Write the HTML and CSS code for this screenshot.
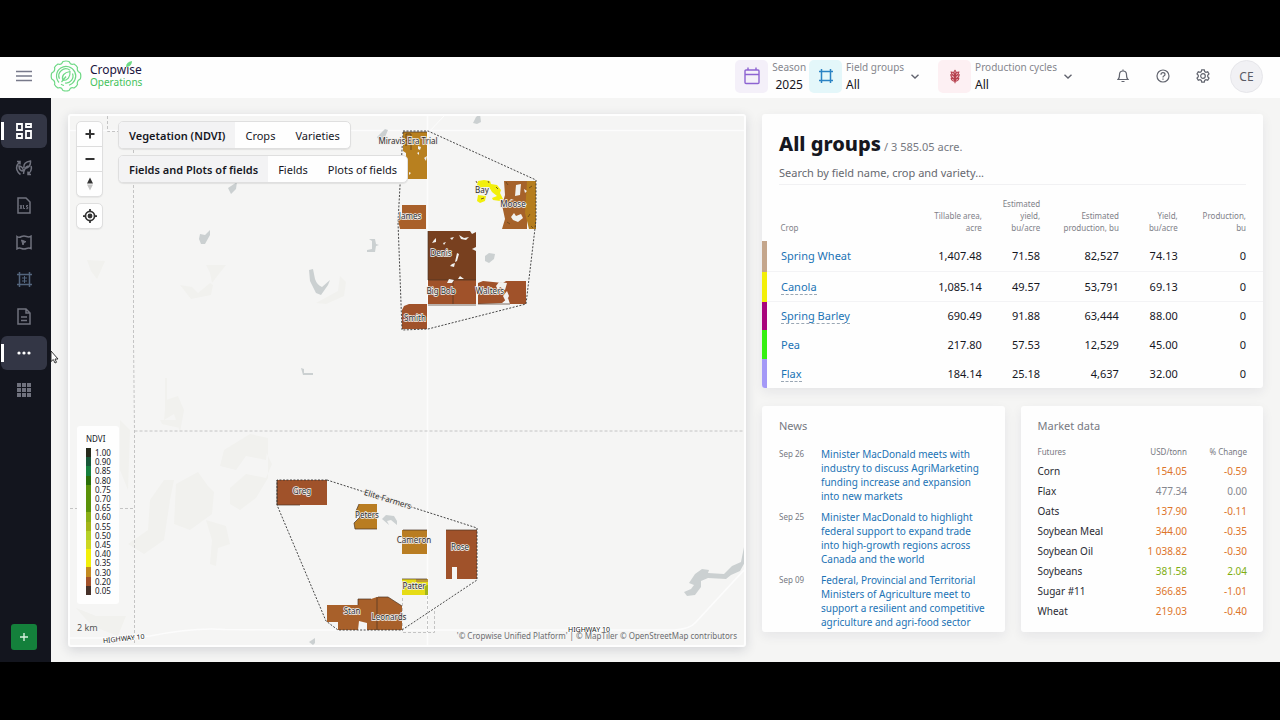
FILE: index.html
```html
<!DOCTYPE html>
<html lang="en">
<head>
<meta charset="utf-8">
<title>Cropwise Operations</title>
<link rel="stylesheet" href="styles.css">
</head>
<body>
<div class="app">
  <header class="topbar">
    <button class="icon-btn menu-btn" aria-label="Menu">
      <svg width="16" height="12" viewBox="0 0 16 12"><path d="M0 1.500h16M0 6h16M0 10.500h16" stroke="#77798a" stroke-width="1.400"/></svg>
    </button>
    <a class="brand" href="#">
      <svg width="32" height="32" viewBox="-16 -16 32 32" fill="none" stroke="#6fd986" stroke-width="1.200">
        <path d="M-3-14.500Q0-15.500 3-14.500L4.500-12.200Q6-11.200 8-12Q10.500-10.500 11.500-8.500Q10.800-6 12.200-4.500L14.300-3Q15.300 0 14.300 3L12.200 4.500Q10.800 6.500 11.500 8.500Q10.500 10.500 8 12Q6 11.200 4.500 12.200L3 14.500Q0 15.500-3 14.500L-4.500 12.200Q-6 11.200-8 12Q-10.500 10.500-11.500 8.500Q-10.800 6-12.200 4.500L-14.300 3Q-15.300 0-14.300-3L-12.200-4.500Q-10.800-6-11.500-8.500Q-10.500-10.500-8-12Q-6-11.200-4.500-12.200Z"/>
        <path d="M-7 6.500A9.600 9.600 0 1 1 3 9.200M-6.500 2.800A7 7 0 0 1 4-5.800M6.500-2.500A7 7 0 0 1-1 7M-2 9.500A9.600 9.600 0 0 1-5 8.300"/>
        <path d="M-3 4.500C-5-.500-1.500-3.500 4-4.500C4.500 1 1.500 4.500-3 4.500M-4.500 6L0 .5"/>
      </svg>
      <span class="brand-text">
        <span class="brand-name">Cropwise<svg class="brand-leaf" width="6" height="7" viewBox="0 0 6 7"><path d="M0 6Q0 1 6 0Q6 5 1 6Z" fill="#6fd986"/></svg></span>
        <span class="brand-sub">Operations</span>
      </span>
    </a>
    <div class="filters">
      <button class="filter season">
        <span class="tile violet"><svg width="16" height="18" viewBox="0 0 16 18" fill="none" stroke="#8d63d2" stroke-width="1.400"><rect x="1" y="3" width="14" height="13.500" rx="1"/><path d="M1 7.500h14M4 .5V3M12 .5V3"/></svg></span>
        <span class="filter-text centered"><span class="filter-label">Season</span><span class="filter-value">2025</span></span>
      </button>
      <button class="filter groups">
        <span class="tile cyan"><svg width="14" height="14" viewBox="0 0 14 14" fill="none" stroke="#2a83c4" stroke-width="1.500"><path d="M2.500 0v14M11.500 0v14M0 2.500h14M0 11.500h14"/></svg></span>
        <span class="filter-text"><span class="filter-label">Field groups</span><span class="filter-value">All</span></span>
        <svg class="chevron" width="8" height="5" viewBox="0 0 8 5"><path d="M.5.8L4 4L7.500.8" fill="none" stroke="#62646f" stroke-width="1.400"/></svg>
      </button>
      <button class="filter cycles">
        <span class="tile pink"><svg width="12" height="15" viewBox="0 0 14 16" fill="#f3c3cb" stroke="#b5404d" stroke-width="1.300"><path d="M7 .8Q4.500 3 7 5.500Q9.500 3 7 .8ZM7 7Q3 6.500 2.500 2.800Q6 3 7 7ZM7 7Q11 6.500 11.500 2.800Q8 3 7 7ZM7 10.500Q2.500 10 2 6Q6.500 6.500 7 10.500ZM7 10.500Q11.500 10 12 6Q7.500 6.500 7 10.500ZM7 13.500Q3 13.500 2.500 10Q6.500 10 7 13.500ZM7 13.500Q11 13.500 11.500 10Q7.500 10 7 13.500ZM7 5v11"/></svg></span>
        <span class="filter-text"><span class="filter-label">Production cycles</span><span class="filter-value">All</span></span>
        <svg class="chevron" width="8" height="5" viewBox="0 0 8 5"><path d="M.5.8L4 4L7.500.8" fill="none" stroke="#62646f" stroke-width="1.400"/></svg>
      </button>
    </div>
    <div class="tools">
      <button class="icon-btn" aria-label="Notifications"><svg width="12" height="14" viewBox="0 0 12 14" fill="none" stroke="#62656f" stroke-width="1.200"><path d="M1 10.500Q2.500 9.500 2.500 5.500Q2.600 2 6 2Q9.400 2 9.500 5.500Q9.500 9.500 11 10.500ZM6 .5V2M4.500 12.500h3"/></svg></button>
      <button class="icon-btn" aria-label="Help"><svg width="14" height="14" viewBox="0 0 14 14" fill="none" stroke="#62656f" stroke-width="1.200"><circle cx="7" cy="7" r="6"/><path d="M5 5.700Q5 3.700 7 3.700T9 5.500Q9 6.500 7.800 7Q7 7.400 7 8.500M7 9.600v1.200"/></svg></button>
      <button class="icon-btn" aria-label="Settings"><svg width="14" height="14" viewBox="0 0 14 14" fill="none" stroke="#62656f" stroke-width="1.200"><path d="M5.700.8h2.600l.4 1.800 1.200.7 1.800-.5 1.300 2.200-1.300 1.300v1.400l1.300 1.300-1.300 2.200-1.800-.5-1.200.7-.4 1.800H5.700l-.4-1.800-1.200-.7-1.800.5L1 9l1.300-1.300V6.300L1 5l1.300-2.200 1.800.5 1.200-.7Z"/><circle cx="7" cy="7" r="2.300"/></svg></button>
      <button class="avatar">CE</button>
    </div>
  </header>
  <div class="body">
    <nav class="sidebar" aria-label="Main">
      <div class="side-items">
        <a class="side-item active" href="#" aria-label="Dashboard"><svg width="16" height="16" viewBox="0 0 16 16" fill="none" stroke="#fff" stroke-width="1.800"><path d="M1 1h5v6H1ZM10 1h5v3h-5ZM10 8h5v7h-5ZM1 11h5v4H1Z"/></svg></a>
        <a class="side-item" href="#" aria-label="Crop rotation"><svg width="18" height="18" viewBox="0 0 18 18" fill="none" stroke="currentColor" stroke-width="1.500"><path d="M2 2.500h3v3M4.500 3Q.5 7 2 11Q3 14 5.500 15.500M16 15.500h-3v-3M13.500 15Q17.500 11 16 7M8.500 15Q9 9 13 7M8.500 12Q4 12 4 7Q8 7.500 8.500 12ZM9 9Q8 3 15.500 2Q16 8 10 9.500"/></svg></a>
        <a class="side-item" href="#" aria-label="Spreadsheets"><svg width="14" height="17" viewBox="0 0 14 17" fill="none" stroke="currentColor"><path d="M1 1h8l4 4v11H1Z" stroke-width="1.500"/><path d="M3 8l2 4M5 8l-2 4M6.500 8v3.500h1.500M11 8.500h-1.500v1.500h1.200v1.700h-1.500"/></svg></a>
        <a class="side-item" href="#" aria-label="Map"><svg width="16" height="15" viewBox="0 0 16 15" fill="none" stroke="currentColor" stroke-width="1.500"><path d="M1 1.500Q3 3 5.500 1.500Q8 .5 10.500 1.500Q13 2.500 15 1.200V13.500Q13 12.500 10.500 13.500Q8 14.500 5.500 13.500Q3 12.500 1 13.800Z"/><path d="M5.500 5l4.500 1.700-2 .8-1 2.500Z" fill="currentColor" stroke-width="1"/></svg></a>
        <a class="side-item fields" href="#" aria-label="Fields"><svg width="15" height="15" viewBox="0 0 15 15" fill="none" stroke="currentColor" stroke-width="1.500"><path d="M2.500 0v15M12.500 0v15M0 2.500h15M0 12.500h15"/><path d="M5 6h5M5 9h5M7.500 4v7" stroke-width="1"/></svg></a>
        <a class="side-item" href="#" aria-label="Reports"><svg width="14" height="17" viewBox="0 0 14 17" fill="none" stroke="currentColor" stroke-width="1.500"><path d="M1 1h8l4 4v11H1ZM4 9h6M4 12.500h6M9 1v4h4"/></svg></a>
        <a class="side-item active" href="#" aria-label="More"><svg width="14" height="4" viewBox="0 0 14 4" fill="#fff"><circle cx="2" cy="2" r="1.600"/><circle cx="7" cy="2" r="1.600"/><circle cx="12" cy="2" r="1.600"/></svg></a>
        <a class="side-item" href="#" aria-label="Apps"><svg width="14" height="14" viewBox="0 0 14 14" fill="currentColor"><path d="M0 0h4v4H0ZM5 0h4v4H5ZM10 0h4v4h-4ZM0 5h4v4H0ZM5 5h4v4H5ZM10 5h4v4h-4ZM0 10h4v4H0ZM5 10h4v4H5ZM10 10h4v4h-4Z"/></svg></a>
      </div>
      <button class="add-btn" aria-label="Add"><svg width="10" height="10" viewBox="0 0 10 10"><path d="M5 1v8M1 5h8" stroke="#d9f0df" stroke-width="1.400"/></svg></button>
      <svg class="cursor" width="9" height="14" viewBox="0 0 9 14"><path d="M1 1V11.500L3.300 9.500L5 13L6.500 12.300L5 9H8Z" fill="#fff" stroke="#222" stroke-width=".9"/></svg>
    </nav>
    <main class="content">
      <section class="card map" aria-label="Map">
        <svg class="map-canvas" viewBox="70 116 674 529" preserveAspectRatio="xMidYMid slice">
          <rect x="0" y="0" width="900" height="800" fill="#f5f5f4"/>
          <g fill="#f1f1ee">
            <path d="M206 265h20l-8 10-6 8-2-10zM180 285l12 2 6 6 12-10 3 2-2 10-20 4zM87 260l18 1-8 18-6-8zM340 276l6 6-2 14-18 8-10-1 22-12zM176 484l22-12 10 14 6 6-2 22-22 16-16-6zM230 488l16-14 20 4 6-14-10-20 6-6v40l-12 20-16 12-10-6zM150 500l14-20 10 0-4 20-6 40-20 14-16-10 20-14zM206 520l20 6 4 18-12 4-2 18-6-2 2-24zM160 420h20v8l-18-4zM120 420l10 10-2 60-8-20zM166 400l12-4 6 14-4 22-6-18-10 6zM224 450l26-16 18 4-2 22-20-4-10 14-16-4zM76 608l20 8 30 0-8 20-26-10zM165 378h2v36h-2z"/>
          </g>
          <g fill="none" stroke="#fcfcfc">
            <path d="M427.500 116V645" stroke-width="1.600"/><path d="M66 130.500H744" stroke-width="1.500"/><path d="M427 134L444 116" stroke-width="1"/>
            <path d="M70 638H120L150 636Q195 627 225 629.500L300 630H675Q690 629 696 622L744 570" stroke-width="1.600"/>
          </g>
          <g fill="none" stroke="#c4c4c4" stroke-width="1" stroke-dasharray="3 2">
            <path d="M107.500 116V131.500H133.500V340L134.500 431V645M134.500 431H744M70 508.500H134.500M402.500 598V632.500H434.500V611M427.500 596V632"/>
          </g>
          <g fill="#cbd0d1">
            <path d="M476 117l4-3 1 8-4 2-4-1zM377 137l8-8 3 1-3 7-5 5zM200 234l5 1 5-5v5l-5 9h-4l-2-5zM367 250l5-1v-8l-3-2h6l1 5 3 1-3 1-1 6h-8zM309 270l4-1 2 10q2 6 7 8l8-7-2 5-7 10-5-2-6-12zM301 368l3 1v4h9v2h-10zM489 253l6 1-1 5-5 4-4-2v-5zM228 188l9-6-1 7-5 5zM382 519l4-4 8 1 3 5v4l-6-5-4 1 2 4zM309 642l6-4v5l-2 2z"/>
            <path d="M684 592l7-3 3-4-5-2 6-9 7-5 7 1-1 3 16 1 8-8 9-4 2-10 1-5 4-1-3 16-5 9-9 4-5 4-18-1-7 3v6l-6 8-8 1z"/>
          </g>
          <g>
            <path d="M403 132H427V179H406V153L403 151Z" fill="#b8801f"/>
            <path d="M402 205H426V229H400L398 220L402 216Z" fill="#a9602a"/>
            <path d="M428 231H470L472 234L476 232V280H428Z" fill="#78401f"/>
            <path d="M428 280H476V304H428ZM478 283L483 281L503 283L506 281H526V304H510L508 298L502 303L478 304Z" fill="#a0522a"/>
            <path d="M404 306L409 304H427V329H402V310Z" fill="#a0522a"/>
            <path d="M504 181H527V229H502L505 219L502 205L505 195Z" fill="#a6622a"/><path d="M527 181H536V229H529L525 213Z" fill="#b57d1e"/>
            <path d="M478 181L484 180L490 181L491 184L497 185L501 190L500 193L503 199L500 201L493 200L492 198L497 196L492 192L489 187L484 187L480 188L477 185ZM478 195L486 196L485 201L480 203L477 201Z" fill="#f2ef0c"/>
            <path d="M277 480H327V505H277Z" fill="#a0522a"/>
            <path d="M359 504H377V529H355L354 523L360 517L356 511Z" fill="#b97d22"/>
            <path d="M402 530H427V554H402Z" fill="#b97d22"/>
            <path d="M446 530H477V579H457V567H452V579H446Z" fill="#a0522a"/>
            <path d="M402 579H428V595H402Z" fill="#e6dc16"/><path d="M416 579H428V582H416Z" fill="#c09a35"/><path d="M425 585h3v10h-3z" fill="#a3b51a"/>
            <path d="M327 605H358V599H371L377 597H388L402 606V630H367V623L359 621L358 630H338V622H327Z" fill="#a8602a"/>
            <path d="M403 132H427M406 146V134H411V150M428 280H476M428 231V280M428 305H476M453 280V304M478 304H510M377 597V630M358 605V599H371M277 480V505H300M403 530H427M446 530H477M378 597H388L402 606M359 504L356 511L360 517L354 523L355 529H377M402 579H427" fill="none" stroke="#4b3524" stroke-width=".7"/>
            <path d="M476 181l1 2M488 181l1 2M496 187l2 2M481 199l3-1M405 142l2-2M425 136l1 4M424 158l2 2M506 182l2 3M529 188l3-2M505 205l2 3M530 214l-2 3M507 222l3 2M531 226l2 2" fill="none" stroke="#6b4a1d" stroke-width=".9"/>
            <path d="M418 146l3 1-1 3-2-1zM417 153l2-1v3zM424 158l3-2-1 5zM409 172l2 1-2 2zM434 240l2-2v4l-4 1zM450 238l4-1-2 3zM459 235l5 3 5-1-3 3-5-1zM443 243l3-1-2 3zM457 253l2 1-2 7-2 1zM452 264l3-1-1 4-4-1zM472 249l4-2v4zM449 279l5 1-2 3h-5zM460 276l4 3h-6zM516 185l5-1-1 11-5 1zM524 189l3 2-2 2zM514 213l2 3 5-2 2 4-5 4-5-2-2-3zM514 200l-3-1-2 2zM524 203l3 1-2 2zM499 282l8 1-2 7-5-3-2 3-2-4zM503 296l4-5 2 5-3 6z" fill="#f1f1ef"/>
          </g>
          <g fill="none" stroke="#333" stroke-width=".9" stroke-dasharray="2 1.500">
            <path d="M403 131H428L536 180V220L526 304L428 329L402 330L398 222L403 132ZM327 480L477 528V580L402 630H338L326 621L277 505V480Z"/>
          </g>
          <g class="field-labels">
            <text x="408" y="144">Miravis Era Trial</text><text x="482" y="193">Bay</text><text x="513" y="207">Moose</text>
            <text x="410" y="219">James</text><text x="441" y="256">Denis</text><text x="441" y="294">Big Bob</text><text x="490" y="294">Walters</text>
            <text x="415" y="321">Smith</text><text x="302" y="494">Greg</text><text x="367" y="518">Peters</text><text x="414" y="543">Cameron</text>
            <text x="460" y="550">Rose</text><text x="414" y="589">Patter</text><text x="352" y="614">Stan</text><text x="389" y="620">Leonards</text>
            <text x="387" y="502" transform="rotate(17 387 502)">Elite Farmers</text>
          </g>
          <g class="road-labels"><text x="124" y="641" transform="rotate(-6 124 641)">HIGHWAY 10</text><text x="589" y="632">HIGHWAY 10</text></g>
        </svg>
        <div class="map-overlay">
          <div class="map-top">
            <div class="map-buttons">
              <div class="btn-stack">
                <button class="map-btn" aria-label="Zoom in"><svg width="10" height="10" viewBox="0 0 10 10"><path d="M5 .5v9M.5 5h9" stroke="#333" stroke-width="2"/></svg></button>
                <button class="map-btn" aria-label="Zoom out"><svg width="10" height="10" viewBox="0 0 10 10"><path d="M.5 5h9" stroke="#333" stroke-width="2"/></svg></button>
                <button class="map-btn" aria-label="Reset north"><svg width="8" height="14" viewBox="0 0 8 14"><path d="M1 6.500L4 .5L7 6.500Z" fill="#333"/><path d="M1 7.500L4 13.500L7 7.500Z" fill="#c4c4c4"/></svg></button>
              </div>
              <div class="btn-stack">
                <button class="map-btn" aria-label="My location"><svg width="14" height="14" viewBox="0 0 16 16" fill="none" stroke="#333" stroke-width="2"><circle cx="8" cy="8" r="5.200"/><path d="M8 0v3M8 13v3M0 8h3M13 8h3"/><circle cx="8" cy="8" r="1.800" fill="#333"/></svg></button>
              </div>
            </div>
            <div class="switches">
              <div class="switch"><button class="opt on">Vegetation (NDVI)</button><button class="opt">Crops</button><button class="opt">Varieties</button></div>
              <div class="switch"><button class="opt on">Fields and Plots of fields</button><button class="opt">Fields</button><button class="opt">Plots of fields</button></div>
            </div>
          </div>
          <div class="map-bottom">
            <div class="legend">
              <div class="legend-title">NDVI</div>
              <ul class="legend-list">
                <li class="c100">1.00</li><li class="c90">0.90</li><li class="c85">0.85</li><li class="c80">0.80</li><li class="c75">0.75</li><li class="c75">0.70</li><li class="c75">0.65</li><li class="c60">0.60</li><li class="c55">0.55</li><li class="c50">0.50</li><li class="c45">0.45</li><li class="c40">0.40</li><li class="c40">0.35</li><li class="c30">0.30</li><li class="c20">0.20</li><li class="c05">0.05</li>
              </ul>
            </div>
            <div class="map-foot">
              <span class="scale">2 km</span>
              <span class="attribution">'© Cropwise Unified Platform' | © MapTiler © OpenStreetMap contributors</span>
            </div>
          </div>
        </div>
      </section>
      <div class="panels">
        <section class="card groups-card">
          <div class="groups-head">
            <h1 class="title">All groups <span class="title-area">/ 3 585.05 acre.</span></h1>
            <input class="search" type="text" aria-label="Search" placeholder="Search by field name, crop and variety...">
          </div>
          <table class="crops">
            <colgroup><col class="w-crop"><col class="w-area"><col class="w-ey"><col class="w-ep"><col class="w-y"><col class="w-p"></colgroup>
            <thead><tr><th>Crop</th><th>Tillable area,<br>acre</th><th>Estimated<br>yield,<br>bu/acre</th><th>Estimated<br>production, bu</th><th>Yield,<br>bu/acre</th><th>Production,<br>bu</th></tr></thead>
            <tbody>
              <tr class="wheat"><td><a class="plain" href="#">Spring Wheat</a></td><td>1,407.48</td><td>71.58</td><td>82,527</td><td>74.13</td><td>0</td></tr>
              <tr class="canola"><td><a href="#">Canola</a></td><td>1,085.14</td><td>49.57</td><td>53,791</td><td>69.13</td><td>0</td></tr>
              <tr class="barley"><td><a href="#">Spring Barley</a></td><td>690.49</td><td>91.88</td><td>63,444</td><td>88.00</td><td>0</td></tr>
              <tr class="pea"><td><a class="plain" href="#">Pea</a></td><td>217.80</td><td>57.53</td><td>12,529</td><td>45.00</td><td>0</td></tr>
              <tr class="flax"><td><a href="#">Flax</a></td><td>184.14</td><td>25.18</td><td>4,637</td><td>32.00</td><td>0</td></tr>
            </tbody>
          </table>
        </section>
        <div class="lower">
          <section class="card small-card">
            <h2 class="card-title">News</h2>
            <div class="news">
              <time class="date">Sep 26</time><a class="news-link" href="#">Minister MacDonald meets with industry to discuss AgriMarketing funding increase and expansion into new markets</a>
              <time class="date">Sep 25</time><a class="news-link" href="#">Minister MacDonald to highlight federal support to expand trade into high-growth regions across Canada and the world</a>
              <time class="date">Sep 09</time><a class="news-link" href="#">Federal, Provincial and Territorial Ministers of Agriculture meet to support a resilient and competitive agriculture and agri-food sector</a>
            </div>
          </section>
          <section class="card small-card">
            <h2 class="card-title">Market data</h2>
            <table class="market">
              <thead><tr><th>Futures</th><th>USD/tonn</th><th>% Change</th></tr></thead>
              <tbody>
                <tr class="down"><td>Corn</td><td>154.05</td><td>-0.59</td></tr>
                <tr class="flat"><td>Flax</td><td>477.34</td><td>0.00</td></tr>
                <tr class="down"><td>Oats</td><td>137.90</td><td>-0.11</td></tr>
                <tr class="down"><td>Soybean Meal</td><td>344.00</td><td>-0.35</td></tr>
                <tr class="down"><td>Soybean Oil</td><td>1 038.82</td><td>-0.30</td></tr>
                <tr class="up"><td>Soybeans</td><td>381.58</td><td>2.04</td></tr>
                <tr class="down"><td>Sugar #11</td><td>366.85</td><td>-1.01</td></tr>
                <tr class="down"><td>Wheat</td><td>219.03</td><td>-0.40</td></tr>
              </tbody>
            </table>
          </section>
        </div>
      </div>
    </main>
  </div>
</div>
</body>
</html>
```

FILE: styles.css
```css
* { box-sizing: border-box; }
body { margin: 0; background: #000; font-family: "Noto Sans", "Open Sans", sans-serif; font-size: 11px; color: #16171f; }
button { font: inherit; color: inherit; background: none; border: 0; padding: 0; cursor: pointer; }
a { text-decoration: none; color: inherit; }
.app { margin: 57px 0 58px; min-height: calc(100vh - 115px); display: flex; flex-direction: column; background: #f5f5f4; }

.topbar { display: flex; align-items: center; height: 41px; padding: 0 17px 3px 16px; background: #fefefe; }
.icon-btn { display: flex; align-items: center; justify-content: center; width: 16px; height: 16px; }
.brand { display: flex; align-items: center; margin-left: 18px; gap: 8px; }
.brand-text { display: flex; flex-direction: column; line-height: 13px; }
.brand-name { position: relative; font-size: 12px; color: #1a1440; }
.brand-leaf { position: absolute; left: 36px; top: -2px; }
.brand-sub { font-size: 10px; color: #43c25a; }
.filters { display: flex; margin-left: auto; }
.filter { display: flex; align-items: center; text-align: left; gap: 4px; }
.season { margin-right: 3px; }
.groups { margin-right: 19px; }
.tile { display: flex; align-items: center; justify-content: center; width: 33px; height: 33px; border-radius: 5px; }
.violet { background: #f4f0f9; }
.cyan { background: #e4f7fa; }
.pink { background: #fdf0f3; }
.filter-text { display: flex; flex-direction: column; line-height: 17px; }
.filter-text.centered { align-items: center; }
.filter-label { font-size: 10px; color: #85868d; }
.filter-value { font-size: 12px; }
.chevron { margin-left: 3px; }
.tools { display: flex; align-items: center; gap: 24px; margin-left: 43px; }
.avatar { width: 33px; height: 33px; margin-left: -5px; border-radius: 50%; background: #f1f1f4; border: 1px solid #e6e6ea; font-size: 12px; color: #5a5c66; }

.body { flex: 1; display: flex; }
.sidebar { position: relative; z-index: 2; display: flex; flex-direction: column; justify-content: space-between; width: 51px; padding: 16px 0 12px; background: #13151e; }
.side-items { display: flex; flex-direction: column; gap: 3px; padding: 0 4px 0 1px; }
.side-item { display: flex; align-items: center; justify-content: center; height: 34px; border-radius: 6px; color: #70727e; }
.side-item.fields { color: #53657d; }
.side-item.active { background: linear-gradient(#fff, #fff) left / 3px 18px no-repeat #333645; }
.add-btn { display: flex; align-items: center; justify-content: center; width: 26px; height: 26px; margin-left: 11px; border-radius: 3px; background: #14803b; }
.cursor { position: absolute; left: 50px; top: 252px; }

.content { flex: 1; display: grid; grid-template-columns: 678fr 501fr; gap: 16px; padding: 16px 17px 15px; min-width: 0; }
.card { background: #fefefe; border-radius: 3px; box-shadow: 0 4px 12px rgba(30, 35, 70, .07); }
.map { position: relative; border: 2px solid #fefefe; overflow: hidden; box-shadow: 0 3px 12px rgba(30, 35, 60, .16); }
.map-canvas { position: absolute; inset: 0; width: 100%; height: 100%; }
.field-labels text { font-size: 8px; text-anchor: middle; fill: #2c2c2c; stroke: #f3f0ec; stroke-width: 1.5px; paint-order: stroke; }
.road-labels text { font-size: 7px; text-anchor: middle; fill: #222; stroke: #fff; stroke-width: 1.5px; paint-order: stroke; }
.map-overlay { position: relative; height: 100%; display: flex; flex-direction: column; justify-content: space-between; padding: 5px 7px 3px 6px; }
.map-top { display: flex; gap: 15px; align-items: flex-start; }
.map-buttons { display: flex; flex-direction: column; gap: 6px; }
.btn-stack { width: 27px; border: 1px solid #dfdfdf; border-radius: 5px; background: #fefefe; box-shadow: 0 1px 1px rgba(0, 0, 0, .06); }
.map-btn { display: flex; align-items: center; justify-content: center; width: 100%; height: 24px; }
.map-btn + .map-btn { height: 25px; border-top: 1px solid #ddd; }
.switches { display: flex; flex-direction: column; align-items: flex-start; gap: 6px; }
.switch { display: flex; border: 1px solid #dfdfdf; border-radius: 5px; background: #fefefe; box-shadow: 0 1px 1px rgba(0, 0, 0, .08); overflow: hidden; }
.opt { height: 26px; padding: 0 10px; }
.opt.on { font-weight: 600; background: #f3f3f4; }
.map-bottom { display: flex; flex-direction: column; align-items: stretch; gap: 18px; padding-left: 1px; }
.legend { width: 42px; padding: 8px 8px 9px 9px; background: #fefefe; border-radius: 3px; font-size: 8px; }
.legend-title { line-height: 10px; margin-bottom: 4px; }
.legend-list { display: grid; grid-auto-rows: 1fr; height: 147px; margin: 0; padding: 0; list-style: none; }
.legend-list li { display: flex; align-items: center; line-height: 9px; padding-left: 4px; border-left-width: 5px; border-left-style: solid; }
.c100 { border-left-color: #262a1c; }
.c90 { border-left-color: #185638; }
.c85 { border-left-color: #17803f; }
.c80 { border-left-color: #2a6f08; }
.c75 { border-left-color: #5a9209; }
.c60 { border-left-color: #8bb017; }
.c55 { border-left-color: #a4b61a; }
.c50 { border-left-color: #b6d128; }
.c45 { border-left-color: #cdd722; }
.c40 { border-left-color: #f3f00a; }
.c30 { border-left-color: #c48b21; }
.c20 { border-left-color: #a3522b; }
.c05 { border-left-color: #463129; }
.map-foot { display: flex; justify-content: space-between; align-items: flex-end; line-height: 12px; }
.scale { width: 62px; height: 20px; font-size: 9px; color: #555; }
.attribution { font-size: 8px; color: #6c6d70; }

.panels { display: flex; flex-direction: column; gap: 18px; padding-bottom: 15px; min-width: 0; }
.groups-card { overflow: hidden; }
.groups-head { padding: 16px 17px 0; }
.title { margin: 0; font-size: 20px; font-weight: 800; line-height: 28px; }
.title-area { margin-left: -2px; font-size: 11px; font-weight: 400; line-height: 1; color: #777982; }
.search { display: block; width: 100%; height: 27px; padding: 2px 0 0; border: 0; border-bottom: 1px solid #f1f1f3; background: none; font: inherit; }
.search::placeholder { color: #66686f; opacity: 1; }
.crops { width: 100%; table-layout: fixed; border-collapse: collapse; text-align: right; }
.w-crop { width: 26%; }
.w-area { width: 17.6%; }
.w-ey { width: 11.7%; }
.w-ep { width: 15.8%; }
.w-y { width: 11.8%; }
.w-p { width: 17.1%; }
.crops th { height: 56px; padding: 0 0 7px; vertical-align: bottom; font-size: 8px; font-weight: 400; line-height: 12px; color: #808188; }
.crops td { height: 29px; padding: 0; }
.crops th:first-child { padding-left: 16px; text-align: left; }
.crops td:first-child { padding-left: 14px; text-align: left; border-left: 5px solid; }
.crops th:last-child, .crops td:last-child { padding-right: 17px; }
.crops a { color: #1b73b5; border-bottom: 1px dashed #9aa7b4; }
.crops a.plain { border-bottom: 0; }
.crops .wheat td, .crops .canola td { height: 30px; border-bottom: 1px solid #f3f3f5; }
.crops .wheat td:first-child { border-left-color: #c4a68c; }
.crops .canola td:first-child { border-left-color: #f3ef09; }
.crops .barley td:first-child { border-left-color: #a8057c; }
.crops .pea td:first-child { border-left-color: #35f011; }
.crops .flax td:first-child { border-left-color: #a499f7; }

.lower { flex: 1 0 226px; display: grid; grid-template-columns: 1fr 1fr; gap: 16px; }
.small-card { padding: 12px 16px 0 17px; overflow: hidden; max-height: 226px; }
.card-title { margin: 0; font-size: 11px; font-weight: 400; line-height: 16px; color: #777982; }
.news { display: grid; grid-template-columns: 34px 1fr; column-gap: 8px; row-gap: 7px; margin: 13px 0 0; }
.date { font-size: 8px; line-height: 14px; color: #777982; }
.news-link { font-size: 10px; line-height: 14px; color: #1b73b5; }
.market { width: 100%; margin-top: 7px; border-collapse: collapse; font-size: 10px; text-align: right; }
.market th { height: 20px; padding: 0; font-size: 8px; font-weight: 400; color: #777982; }
.market td { height: 20px; padding: 0; }
.market th:first-child, .market td:first-child { text-align: left; color: #2a2b33; }
.market th:first-child { color: #777982; }
.market th:last-child { width: 60px; }
.down { color: #dd7429; }
.flat { color: #85868d; }
.up { color: #7fae12; }
```
